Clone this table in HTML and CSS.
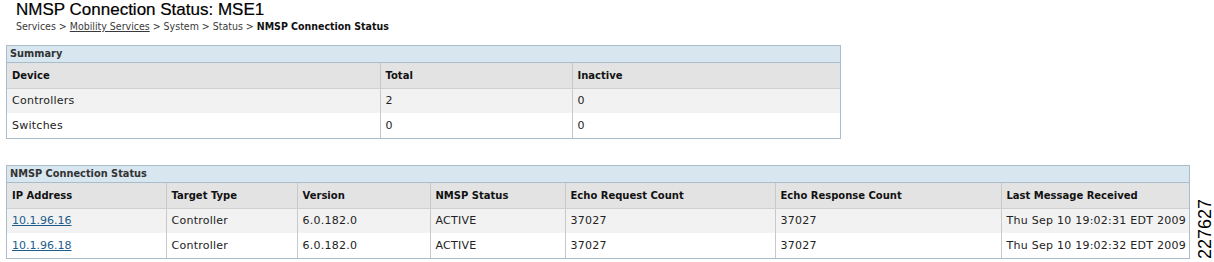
FILE: index.html
```html
<!DOCTYPE html>
<html>
<head>
<meta charset="utf-8">
<link rel="stylesheet" href="styles.css">
</head>
<body>
<div class="page">
  <header class="head">
    <h1 class="title">NMSP Connection Status: MSE1</h1>
    <div class="crumbs">Services &gt; <a href="#" class="crumb-link">Mobility Services</a> &gt; System &gt; Status &gt; <b>NMSP Connection Status</b></div>
  </header>

  <section class="panel panel-summary">
    <div class="panel-title">Summary</div>
    <table class="grid">
      <colgroup><col class="c-device"><col class="c-total"><col></colgroup>
      <thead><tr><th>Device</th><th>Total</th><th>Inactive</th></tr></thead>
      <tbody>
        <tr class="odd"><td>Controllers</td><td>2</td><td>0</td></tr>
        <tr><td>Switches</td><td>0</td><td>0</td></tr>
      </tbody>
    </table>
  </section>

  <section class="panel panel-status">
    <div class="panel-title">NMSP Connection Status</div>
    <table class="grid">
      <colgroup><col class="c-ip"><col class="c-type"><col class="c-ver"><col class="c-nmsp"><col class="c-req"><col class="c-resp"><col></colgroup>
      <thead><tr><th>IP Address</th><th>Target Type</th><th>Version</th><th>NMSP Status</th><th>Echo Request Count</th><th>Echo Response Count</th><th>Last Message Received</th></tr></thead>
      <tbody>
        <tr class="odd"><td><a href="#" class="ip">10.1.96.16</a></td><td>Controller</td><td>6.0.182.0</td><td>ACTIVE</td><td>37027</td><td>37027</td><td>Thu Sep 10 19:02:31 EDT 2009</td></tr>
        <tr><td><a href="#" class="ip">10.1.96.18</a></td><td>Controller</td><td>6.0.182.0</td><td>ACTIVE</td><td>37027</td><td>37027</td><td>Thu Sep 10 19:02:32 EDT 2009</td></tr>
      </tbody>
    </table>
  </section>

  <div class="figno">227627</div>
</div>
</body>
</html>
```

FILE: styles.css
```css
html, body { margin: 0; padding: 0; background: #ffffff; }
body { font-family: "DejaVu Sans", Tahoma, Verdana, sans-serif; color: #000; }
.page { position: relative; width: 1214px; height: 262px; padding: 0 6px; box-sizing: border-box; }
.head { padding-left: 10px; }
.title { margin: 0; font: normal 17px/20px "Liberation Sans", Arial, sans-serif; color: #000; -webkit-text-stroke: 0.2px #000; }
.crumbs { margin-top: 0; font-family: "DejaVu Sans Condensed", "DejaVu Sans", Tahoma, sans-serif; font-size: 10.5px; line-height: 12px; color: #3a3a3a; }
.crumbs b { color: #111; }
.crumb-link { color: #3a3a3a; text-decoration: underline; }
.panel { border: 1px solid #a9bccb; box-sizing: border-box; }
.panel-summary { margin-top: 13px; width: 835px; }
.panel-status { margin-top: 26px; width: 1184px; }
.panel-title { height: 16px; line-height: 16px; background: #d8e6ef; border-bottom: 1px solid #a9bccb; padding-left: 3px; font-size: 9.8px; font-weight: bold; color: #333; }
.grid { width: 100%; border-collapse: collapse; table-layout: fixed; }
.grid th, .grid td { height: 25px; padding: 0 5px; text-align: left; border-left: 1px solid #c9c9c9; white-space: nowrap; overflow: hidden; box-sizing: border-box; }
.grid th:first-child, .grid td:first-child { border-left: none; }
.grid th { background: #e3e3e3; font-size: 10px; font-weight: bold; color: #111; border-bottom: 1px solid #d0d0d0; }
.grid td { font-size: 11px; letter-spacing: 0.25px; color: #222; background: #fff; }
.grid tr.odd td { background: #f2f2f2; }
.c-device { width: 373px; }
.c-total { width: 192px; }
.c-ip { width: 159px; }
.c-type { width: 131px; }
.c-ver { width: 133px; }
.c-nmsp { width: 135px; }
.c-req { width: 210px; }
.c-resp { width: 226px; }
.ip { color: #1d5d8c; text-decoration: underline; letter-spacing: 0; }
.figno { position: absolute; left: 1196px; top: 199px; writing-mode: vertical-rl; transform: rotate(180deg); font: normal 18px/18px "Liberation Sans", Arial, sans-serif; color: #000; }
```
